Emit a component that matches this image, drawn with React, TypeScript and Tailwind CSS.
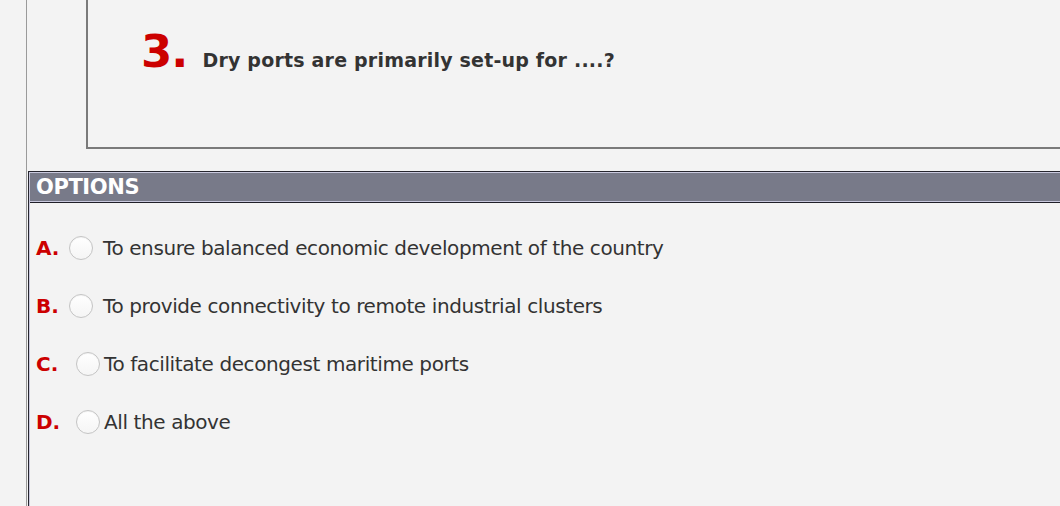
import React from 'react'

const options = [
  { key: 'A', text: 'To ensure balanced economic development of the country', shift: false },
  { key: 'B', text: 'To provide connectivity to remote industrial clusters', shift: false },
  { key: 'C', text: 'To facilitate decongest maritime ports', shift: true },
  { key: 'D', text: 'All the above', shift: true },
]

function Radio() {
  return (
    <span className="block w-[24px] h-[24px] rounded-full border border-[#c4c4c4] bg-gradient-to-b from-white to-[#f5f5f5] shadow-[inset_0_1px_1px_rgba(0,0,0,0.05)]" />
  )
}

export default function App() {
  return (
    <div
      className="h-[506px] w-[1060px] overflow-hidden bg-[#f3f3f3] pl-[26px]"
      style={{ fontFamily: '"DejaVu Sans", Verdana, sans-serif' }}
    >
      <div className="h-full border-l border-[#9a9a9a]">
        {/* question */}
        <div className="ml-[59px] h-[149px] border-l-2 border-b-2 border-[#7a7a7a]">
          <div className="flex items-baseline pl-[53px] pt-[29px]">
            <span className="text-[45px] font-bold leading-none text-[#cc0000] tracking-[-1px]">3.</span>
            <span className="ml-[15px] text-[19px] font-bold text-[#333] tracking-[0.2px]">
              Dry ports are primarily set-up for ....?
            </span>
          </div>
        </div>

        {/* options */}
        <div className="mt-[22px] ml-[1px] h-full border-l border-t border-[#25252e]">
          <div className="h-full border-l border-[#c9c9de]">
            <div className="h-[30px] border-t border-b border-[#c9c9de] bg-[#787a89] shadow-[0_1px_0_#1f1f28]">
              <span className="pl-[6px] text-[21px] font-bold leading-[28px] text-white tracking-[-0.4px]">OPTIONS</span>
            </div>
            <div className="pt-[34px] flex flex-col gap-[34px]">
              {options.map((o) => (
                <div key={o.key} className="flex items-center h-[24px]">
                  <span className="w-[33px] pl-[6px] text-[20px] font-bold text-[#cc0000]">{o.key}.</span>
                  <span className={o.shift ? 'ml-[13px]' : 'ml-[6px]'}>
                    <Radio />
                  </span>
                  <span className={`${o.shift ? 'ml-[4px]' : 'ml-[10px]'} text-[20px] text-[#333] tracking-[-0.4px]`}>
                    {o.text}
                  </span>
                </div>
              ))}
            </div>
          </div>
        </div>
      </div>
    </div>
  )
}
